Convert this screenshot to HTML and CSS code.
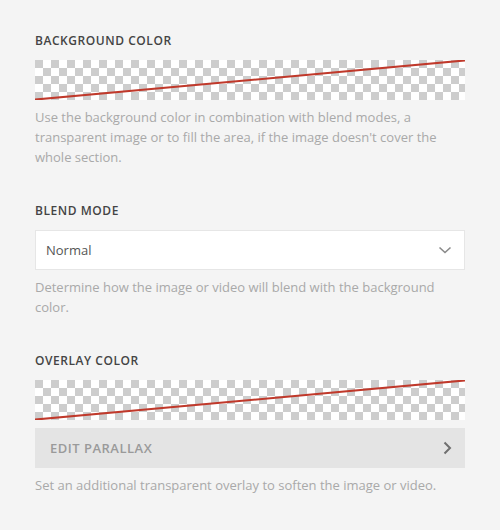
FILE: index.html
```html
<!DOCTYPE html>
<html lang="en">
<head>
  <meta charset="UTF-8">
  <title>Section background</title>
  <link rel="stylesheet" href="styles.css">
</head>
<body>
  <div class="panel">
    <div class="field">
      <h3 class="label">Background Color</h3>
      <div class="swatch">
        <svg viewBox="0 0 100 100" preserveAspectRatio="none"><line x1="0" y1="99" x2="100" y2="1"/></svg>
      </div>
      <p class="help">Use the background color in combination with blend modes, a transparent image or to fill the area, if the image doesn't cover the whole section.</p>
    </div>

    <div class="field">
      <h3 class="label">Blend Mode</h3>
      <div class="select">
        <span>Normal</span>
        <svg class="chevron" width="14" height="8" viewBox="0 0 14 8"><polyline points="1.5,1.5 7,6.5 12.5,1.5"/></svg>
      </div>
      <p class="help">Determine how the image or video will blend with the background color.</p>
    </div>

    <div class="field">
      <h3 class="label">Overlay Color</h3>
      <div class="swatch">
        <svg viewBox="0 0 100 100" preserveAspectRatio="none"><line x1="0" y1="99" x2="100" y2="1"/></svg>
      </div>
      <div class="link-row">
        <span>Edit Parallax</span>
        <svg class="chevron chevron-right" width="9" height="14" viewBox="0 0 9 14"><polyline points="1.5,1.5 7,7 1.5,12.5"/></svg>
      </div>
      <p class="help">Set an additional transparent overlay to soften the image or video.</p>
    </div>
  </div>
</body>
</html>
```

FILE: styles.css
```css
/*
 *  Page and panel.
 */
html, body{
  margin: 0;
  background: #f4f4f4;
}
.panel{
  padding: 33px 35px 0 35px;
  font-family: "Open Sans", sans-serif;
}
.field{
  margin-bottom: 36px;
}

/*
 *  Field labels and help texts.
 */
.label{
  margin: 0 0 11px 0;
  font-size: 12px;
  line-height: 16px;
  font-weight: 600;
  text-transform: uppercase;
  color: #444;
  letter-spacing: 0.55px;
}
.help{
  margin: 7px 0 0 0;
  font-size: 13px;
  line-height: 20px;
  color: #a9a9a9;
}

/*
 *  Empty colour swatch: checkerboard with a red strike.
 */
.swatch{
  position: relative;
  height: 40px;
  background: conic-gradient(#fff 25%, #cdcdcd 0 50%, #fff 0 75%, #cdcdcd 0);
  background-size: 16px 16px;
}
.swatch svg{
  position: absolute;
  left: 0;
  top: 0;
  width: 100%;
  height: 100%;
}
.swatch line{
  stroke: #c0392b;
  stroke-width: 2;
  vector-effect: non-scaling-stroke;
}

/*
 *  Select box and link row.
 */
.select, .link-row{
  display: flex;
  align-items: center;
  justify-content: space-between;
  height: 40px;
  box-sizing: border-box;
}
.select{
  background: #fff;
  border: 1px solid #e6e6e6;
  padding: 0 12px 0 10px;
  font-size: 13px;
  color: #555;
}
.link-row{
  margin-top: 8px;
  background: #e4e4e4;
  padding: 0 13px 0 15px;
  font-size: 13px;
  font-weight: 600;
  letter-spacing: 0.5px;
  text-transform: uppercase;
  color: #9a9a9a;
}
.link-row + .help{
  margin-top: 7px;
}
.chevron polyline{
  fill: none;
  stroke: #8a8a8a;
  stroke-width: 1.6;
}
.chevron-right polyline{
  stroke: #6f6f6f;
  stroke-width: 2;
}
```
